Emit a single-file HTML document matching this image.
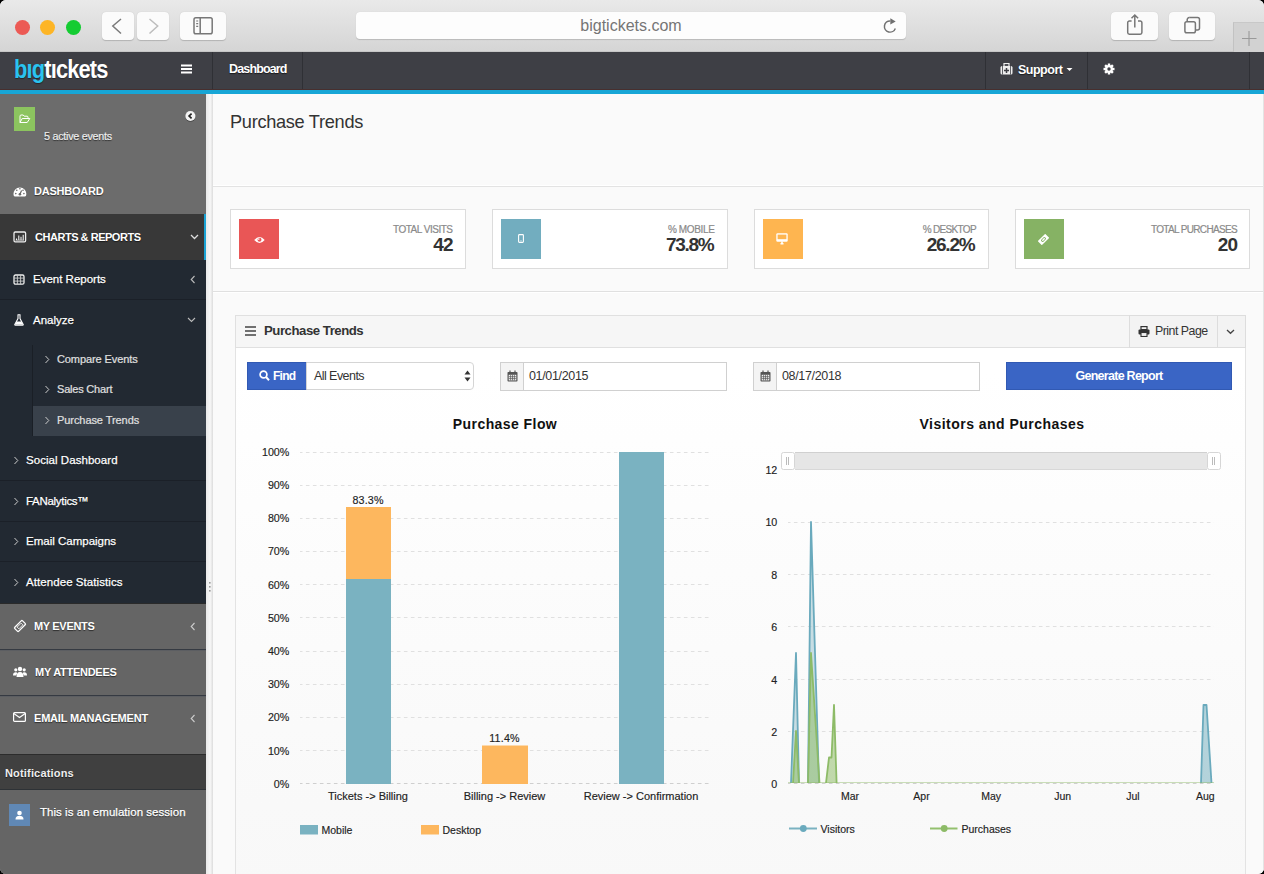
<!DOCTYPE html>
<html><head><meta charset="utf-8">
<style>
*{margin:0;padding:0;box-sizing:border-box}
html,body{width:1264px;height:874px;overflow:hidden;background:#000}
body{font-family:"Liberation Sans",sans-serif;position:relative}
.a{position:absolute;white-space:nowrap}
#win{position:absolute;left:0;top:0;width:1264px;height:874px;border-radius:6px;overflow:hidden;background:#fafafa}
/* safari toolbar */
#tb{left:0;top:0;width:1264px;height:52px;background:linear-gradient(#e9e9e9,#d5d5d5);border-bottom:1px solid #c6c6c6}
.tl{width:15px;height:15px;border-radius:50%;top:20.3px}
.sbtn{background:#fbfbfb;border-radius:4px;box-shadow:0 0.5px 1px rgba(0,0,0,.18)}
#url{left:356px;top:12px;width:550px;height:27px;background:#fdfdfd;border-radius:4px;box-shadow:0 0.5px 1px rgba(0,0,0,.15);font-size:16px;color:#757575;text-align:center;line-height:27px}
/* navbar */
#nav{left:0;top:52px;width:1264px;height:38px;background:#3e3f45}
#blue{left:0;top:90px;width:1264px;height:4px;background:#17a6d6;z-index:5}
.ts{text-shadow:0 1px 1px rgba(0,0,0,.6)}
/* sidebar */
#sb{left:0;top:93px;width:206px;height:781px;background:#6c6c6c}
.sbt{color:#fff;font-weight:bold;font-size:11px;letter-spacing:-.2px;text-shadow:0 1px 1px rgba(0,0,0,.55);line-height:14px}
.sub{color:#fff;font-size:12px;text-shadow:0 1px 1px rgba(0,0,0,.55);line-height:14px;-webkit-text-stroke:.25px #fff}
.ss{color:#e0e0e0;font-size:11px;line-height:14px;letter-spacing:-.2px;-webkit-text-stroke:.2px #e0e0e0}
.chev{color:#bbb}
/* content */
.stat{background:#fff;border:1px solid #dcdcdc;height:59.5px;width:235.5px;top:209px}
.ico{left:8.2px;top:8.5px;width:40px;height:40px}
.slab{right:12px;top:13.5px;font-size:10px;color:#8a8a8a;-webkit-text-stroke:.2px #8a8a8a;letter-spacing:-.45px;line-height:12px}
.sval{right:12px;top:25.3px;font-size:19px;color:#333;font-weight:bold;letter-spacing:-1px;line-height:20px}
.ax{font-size:10.7px;color:#222;line-height:12px;-webkit-text-stroke:.15px #222}
.grid line{stroke:#e0e0e0;stroke-width:1;stroke-dasharray:3.6 3.4;stroke-dashoffset:1.1}
</style></head><body>
<div id="win">
 <!-- SAFARI TOOLBAR -->
 <div id="tb" class="a">
  <div class="a tl" style="left:15px;background:#ec5a55"></div>
  <div class="a tl" style="left:40px;background:#fdb526"></div>
  <div class="a tl" style="left:66px;background:#14cc32"></div>
  <div class="a sbtn" style="left:102px;top:12px;width:32px;height:28px">
   <svg class="a" style="left:0;top:0" width="32" height="28"><path d="M19 7 L10.8 14 L19 21.5" fill="none" stroke="#7a7a7a" stroke-width="1.5"/></svg>
  </div>
  <div class="a sbtn" style="left:137px;top:12px;width:32px;height:28px">
   <svg class="a" style="left:0;top:0" width="32" height="28"><path d="M12.5 7 L20.7 14 L12.5 21.5" fill="none" stroke="#bdbdbd" stroke-width="1.5"/></svg>
  </div>
  <div class="a sbtn" style="left:180px;top:12px;width:46px;height:28px">
   <svg class="a" style="left:0;top:0" width="46" height="28"><rect x="14" y="5.7" width="18.2" height="16" rx="1.8" fill="none" stroke="#777" stroke-width="1.5"/><line x1="20.2" y1="5.7" x2="20.2" y2="21.7" stroke="#777" stroke-width="1.5"/><path d="M16.2 9h2M16.2 11.6h2M16.2 14.3h2" stroke="#777" stroke-width="1.2"/></svg>
  </div>
  <div id="url" class="a">bigtickets.com
   <svg class="a" style="left:526px;top:6px" width="16" height="16"><path d="M13.3 10.4 A5.6 5.6 0 1 1 8.3 2.9" fill="none" stroke="#707070" stroke-width="1.5"/><path d="M8.3 0.3 L13.7 3.4 L8.3 6.6 Z" fill="#707070"/></svg>
  </div>
  <div class="a sbtn" style="left:1111px;top:12px;width:47px;height:28px">
   <svg class="a" style="left:0;top:0" width="47" height="28"><path d="M20.6 9 h-2.2 a1.7 1.7 0 0 0 -1.7 1.7 v9.8 a1.7 1.7 0 0 0 1.7 1.7 h10.8 a1.7 1.7 0 0 0 1.7 -1.7 v-9.8 a1.7 1.7 0 0 0 -1.7 -1.7 h-2.2" fill="none" stroke="#777" stroke-width="1.5"/><path d="M23.8 15.5 V3.2 M20.5 6.3 L23.8 3 L27.1 6.3" fill="none" stroke="#777" stroke-width="1.5"/></svg>
  </div>
  <div class="a sbtn" style="left:1169px;top:12px;width:46px;height:28px">
   <svg class="a" style="left:0;top:0" width="46" height="28"><rect x="15.9" y="9.8" width="10.5" height="11" rx="1.8" fill="none" stroke="#777" stroke-width="1.5"/><path d="M20.2 5.6 h8.3 a2 2 0 0 1 2 2 v8.3 a2 2 0 0 1 -2 2 h-2" fill="none" stroke="#777" stroke-width="1.5"/><path d="M20.2 5.6 a2 2 0 0 0 -2 2 v2.2" fill="none" stroke="#777" stroke-width="1.5"/></svg>
  </div>
  <div class="a" style="left:1233px;top:22px;width:31px;height:30px;background:#d2d2d2;border-left:1px solid #c2c2c2;border-top:1px solid #c8c8c8">
   <svg class="a" style="left:0;top:0" width="31" height="30"><path d="M8 15.5h14.5M15 8v15" stroke="#999" stroke-width="1.1"/></svg>
  </div>
 </div>

 <!-- NAVBAR -->
 <div id="nav" class="a">
  <div class="a" style="left:14px;top:2px;font-size:26px;font-weight:bold;letter-spacing:-1px;line-height:30px;text-shadow:0 1px 1px rgba(0,0,0,.4);transform:scaleX(.84);transform-origin:0 0"><span style="color:#2ac3f0">bıg</span><span style="color:#fff">tıckets</span></div>
  <svg class="a" style="left:180px;top:11px" width="14" height="14"><path d="M1 2.5h11M1 6h11M1 9.5h11" stroke="#fff" stroke-width="2"/></svg>
  <div class="a" style="left:212px;top:0;width:1px;height:38px;background:#2f3035"></div>
  <div class="a ts" style="left:229px;top:9px;font-size:12.5px;font-weight:bold;color:#fff;letter-spacing:-.85px;line-height:16px">Dashboard</div>
  <div class="a" style="left:302px;top:0;width:1px;height:38px;background:#2f3035"></div>
  <div class="a" style="left:985px;top:0;width:1px;height:38px;background:#2f3035"></div>
  <svg class="a" style="left:1000px;top:11px" width="13" height="12"><rect x="0.5" y="3" width="12" height="8.5" rx="1.5" fill="#eee"/><rect x="4" y="0.5" width="5" height="3" fill="none" stroke="#eee" stroke-width="1.2"/><path d="M6.5 5v5M4 7.5h5" stroke="#3e3f45" stroke-width="1.5"/><path d="M2.5 3v8.5M10.5 3v8.5" stroke="#3e3f45" stroke-width=".8"/></svg>
  <div class="a ts" style="left:1018px;top:10px;font-size:12.5px;font-weight:bold;color:#fff;letter-spacing:-.5px;line-height:16px">Support</div>
  <svg class="a" style="left:1066px;top:15px" width="7" height="5"><path d="M0.5 1 L3.5 4 L6.5 1 Z" fill="#fff"/></svg>
  <div class="a" style="left:1087px;top:0;width:1px;height:38px;background:#2f3035"></div>
  <svg class="a" style="left:1103px;top:10.7px" width="12" height="12" viewBox="0 0 12 12"><g fill="#fff" transform="translate(6 6)"><circle r="3.9"/><rect x="-1.2" y="-5.5" width="2.4" height="11"/><rect x="-1.2" y="-5.5" width="2.4" height="11" transform="rotate(45)"/><rect x="-1.2" y="-5.5" width="2.4" height="11" transform="rotate(90)"/><rect x="-1.2" y="-5.5" width="2.4" height="11" transform="rotate(135)"/><circle r="1.7" fill="#3e3f45"/></g></svg>
  <div class="a" style="left:1249px;top:0;width:1px;height:38px;background:#2f3035"></div>
 </div>
 <div id="blue" class="a"></div>
 <div class="a" style="left:0;top:89px;width:1264px;height:1px;background:#472f2e"></div>

 <!-- SIDEBAR -->
 <div id="sb" class="a">
  <!-- top gray panel -->
  <div class="a" style="left:14px;top:14px;width:21px;height:24px;background:#8cc45f"></div>
  <svg class="a" style="left:19px;top:21px" width="12" height="10"><path d="M1 2.2 Q1 1 2 1 H4.2 L5.2 2.2 H8 Q9 2.2 9 3.2 V4 M1 2.2 V8.5 H8.2 L10.8 4.5 H3.2 L1 8.5" fill="none" stroke="#fff" stroke-width="1"/></svg>
  <div class="a ss" style="left:44px;top:36px;font-size:10.8px;letter-spacing:-.28px;color:#eee;-webkit-text-stroke:.2px #eee;text-shadow:0 1px 1px rgba(0,0,0,.6)">5 active events</div>
  <svg class="a" style="left:184px;top:16px" width="13" height="14"><circle cx="6.4" cy="7.6" r="5.2" fill="rgba(0,0,0,.35)"/><circle cx="6.4" cy="7" r="5.1" fill="#f4f4f4"/><path d="M7.6 4.6 L5.1 7 L7.6 9.4" fill="none" stroke="#222" stroke-width="1.7"/></svg>
  <svg class="a" style="left:13px;top:93px" width="14" height="11"><path d="M.6 9 A6.4 6.4 0 1 1 13.2 9 Q13.2 10.4 12 10.4 H1.8 Q.6 10.4 .6 9Z" fill="#fff"/><path d="M6.9 8.2 L8.6 4.6" stroke="#696969" stroke-width="1.2"/><circle cx="6.9" cy="8.3" r="1.3" fill="#696969"/><circle cx="2.8" cy="7.6" r=".8" fill="#696969"/><circle cx="3.8" cy="4.3" r=".8" fill="#696969"/><circle cx="6.9" cy="2.8" r=".8" fill="#696969"/><circle cx="10.9" cy="7.6" r=".8" fill="#696969"/><circle cx="10" cy="4.3" r=".8" fill="#696969"/></svg>
  <div class="a sbt" style="left:34px;top:91px;letter-spacing:-.23px">DASHBOARD</div>
  <!-- charts & reports -->
  <div class="a" style="left:0;top:121px;width:206px;height:46px;background:#383838"></div>
  <div class="a" style="left:204px;top:121px;width:2px;height:46px;background:#1ba3d4"></div>
  <svg class="a" style="left:13px;top:138px" width="14" height="12"><rect x="1" y="1" width="11.6" height="9.8" rx="1.2" fill="none" stroke="#eee" stroke-width="1.3"/><path d="M3.5 9V7.5M5.8 9V4.5M8 9V5.8M10.2 9V3.8" stroke="#fff" stroke-width="1"/><path d="M2.5 9.2H11" stroke="#ddd" stroke-width=".8"/></svg>
  <div class="a sbt" style="left:35px;top:137px;letter-spacing:-.47px">CHARTS &amp; REPORTS</div>
  <svg class="a" style="left:190px;top:141px" width="9" height="6"><path d="M1 1 L4.5 4.5 L8 1" fill="none" stroke="#ddd" stroke-width="1.3"/></svg>
  <!-- navy submenu -->
  <div class="a" style="left:0;top:167px;width:206px;height:343px;background:#222932"></div>
  <div class="a" style="left:0;top:206px;width:206px;height:1px;background:#1b2028"></div>
  <div class="a" style="left:0;top:387px;width:206px;height:1px;background:#1b2028"></div>
  <div class="a" style="left:0;top:428px;width:206px;height:1px;background:#1b2028"></div>
  <div class="a" style="left:0;top:468px;width:206px;height:1px;background:#1b2028"></div>
  <div class="a" style="left:32px;top:252px;width:1px;height:91px;background:#1a1f26"></div>
  <div class="a" style="left:33px;top:313px;width:173px;height:30px;background:#39414b"></div>
  <svg class="a" style="left:13px;top:180.5px" width="12" height="11"><rect x="1" y="1" width="10" height="9.2" rx="1.5" fill="none" stroke="#eee" stroke-width="1.3"/><path d="M1 4.1H11M1 7.1H11M4.4 1V10.2M7.6 1V10.2" stroke="#ccc" stroke-width=".9"/></svg>
  <div class="a sub" style="left:33px;top:179px;font-size:11.5px">Event Reports</div>
  <svg class="a" style="left:190px;top:182px" width="6" height="9"><path d="M4.5 1 L1.2 4.5 L4.5 8" fill="none" stroke="#bbb" stroke-width="1.1"/></svg>
  <svg class="a" style="left:14px;top:221px" width="10" height="12"><path d="M3.5 .8H6.5M4 1V4.5L.8 10.5Q.5 11.2 1.3 11.2H8.7Q9.5 11.2 9.2 10.5L6 4.5V1" fill="none" stroke="#fff" stroke-width="1.1"/><path d="M2.6 7.5H7.4L9 10.8H1Z" fill="#fff"/></svg>
  <div class="a sub" style="left:33px;top:220px;font-size:11.5px">Analyze</div>
  <svg class="a" style="left:187px;top:224px" width="9" height="6"><path d="M1 1 L4.5 4.5 L8 1" fill="none" stroke="#bbb" stroke-width="1.1"/></svg>
  <svg class="a" style="left:44px;top:262px" width="6" height="9"><path d="M1.5 1 L4.8 4.5 L1.5 8" fill="none" stroke="#ccc" stroke-width="1"/></svg>
  <div class="a ss" style="left:57px;top:259px;letter-spacing:-.1px">Compare Events</div>
  <svg class="a" style="left:44px;top:292px" width="6" height="9"><path d="M1.5 1 L4.8 4.5 L1.5 8" fill="none" stroke="#ccc" stroke-width="1"/></svg>
  <div class="a ss" style="left:57px;top:289px;letter-spacing:-.2px">Sales Chart</div>
  <svg class="a" style="left:44px;top:323px" width="6" height="9"><path d="M1.5 1 L4.8 4.5 L1.5 8" fill="none" stroke="#ccc" stroke-width="1"/></svg>
  <div class="a ss" style="left:57px;top:320px;letter-spacing:-.07px">Purchase Trends</div>
  <svg class="a" style="left:13px;top:363px" width="6" height="9"><path d="M1.5 1 L4.8 4.5 L1.5 8" fill="none" stroke="#ccc" stroke-width="1"/></svg>
  <div class="a sub" style="left:26px;top:360px;font-size:11.5px;letter-spacing:.05px">Social Dashboard</div>
  <svg class="a" style="left:13px;top:404px" width="6" height="9"><path d="M1.5 1 L4.8 4.5 L1.5 8" fill="none" stroke="#ccc" stroke-width="1"/></svg>
  <div class="a sub" style="left:26px;top:401px;font-size:11.5px;letter-spacing:-.3px">FANalytics™</div>
  <svg class="a" style="left:13px;top:444px" width="6" height="9"><path d="M1.5 1 L4.8 4.5 L1.5 8" fill="none" stroke="#ccc" stroke-width="1"/></svg>
  <div class="a sub" style="left:26px;top:441px;font-size:11.5px">Email Campaigns</div>
  <svg class="a" style="left:13px;top:485px" width="6" height="9"><path d="M1.5 1 L4.8 4.5 L1.5 8" fill="none" stroke="#ccc" stroke-width="1"/></svg>
  <div class="a sub" style="left:26px;top:482px;font-size:11.5px;letter-spacing:.07px">Attendee Statistics</div>
  <!-- lower gray -->
  <div class="a" style="left:0;top:510px;width:206px;height:271px;background:#656565"></div>
  <div class="a" style="left:0;top:510px;width:206px;height:1px;background:#2a2a2a"></div>
  <svg class="a" style="left:13px;top:526px" width="14" height="14"><g transform="rotate(-45 7 7)"><rect x="1.5" y="4.2" width="11" height="5.6" rx="1" fill="none" stroke="#fff" stroke-width="1.3"/><rect x="4.2" y="5.8" width="5.6" height="2.4" fill="none" stroke="#eee" stroke-width=".9"/></g></svg>
  <div class="a sbt" style="left:34px;top:526px;letter-spacing:-.33px">MY EVENTS</div>
  <svg class="a" style="left:190px;top:529px" width="6" height="9"><path d="M4.5 1 L1.2 4.5 L4.5 8" fill="none" stroke="#ccc" stroke-width="1.1"/></svg>
  <div class="a" style="left:0;top:556px;width:206px;height:1px;background:#353a42"></div>
  <div class="a" style="left:0;top:557px;width:206px;height:1px;background:#5c5e62"></div>
  <svg class="a" style="left:13px;top:573px" width="14" height="12"><circle cx="7" cy="3" r="2.2" fill="#fff"/><circle cx="2.8" cy="3.8" r="1.6" fill="#fff"/><circle cx="11.2" cy="3.8" r="1.6" fill="#fff"/><path d="M3.5 11 Q3.5 6 7 6 Q10.5 6 10.5 11Z" fill="#fff"/><path d="M0 9.5 Q0 6.2 2.8 6.2 Q4 6.2 4.3 7 L3.2 9.5Z M14 9.5 Q14 6.2 11.2 6.2 Q10 6.2 9.7 7 L10.8 9.5Z" fill="#fff"/></svg>
  <div class="a sbt" style="left:35px;top:572px;letter-spacing:-.27px">MY ATTENDEES</div>
  <div class="a" style="left:0;top:602px;width:206px;height:1px;background:#353a42"></div>
  <div class="a" style="left:0;top:603px;width:206px;height:1px;background:#5c5e62"></div>
  <svg class="a" style="left:13px;top:619px" width="13" height="10"><rect x=".6" y=".6" width="11.8" height="8.8" rx="1" fill="none" stroke="#fff" stroke-width="1.2"/><path d="M.8 1.5 L6.5 5.5 L12.2 1.5" fill="none" stroke="#fff" stroke-width="1.1"/></svg>
  <div class="a sbt" style="left:34px;top:618px">EMAIL MANAGEMENT</div>
  <svg class="a" style="left:190px;top:621px" width="6" height="9"><path d="M4.5 1 L1.2 4.5 L4.5 8" fill="none" stroke="#ccc" stroke-width="1.1"/></svg>
  <!-- notifications -->
  <div class="a" style="left:0;top:661px;width:206px;height:36px;background:#404040;border-top:1px solid #2c2c2c;border-bottom:1px solid #2e3236"></div>
  <div class="a sbt" style="left:5px;top:673px;letter-spacing:.17px;color:#eee">Notifications</div>
  <div class="a" style="left:9px;top:711px;width:21px;height:22px;background:#6088b5"></div>
  <svg class="a" style="left:14px;top:716px" width="11" height="12"><circle cx="5.5" cy="4" r="2.3" fill="#fff"/><path d="M1.5 10.5 Q1.5 6.8 5.5 6.8 Q9.5 6.8 9.5 10.5Z" fill="#fff"/></svg>
  <div class="a sub" style="left:40px;top:712px;font-size:11.5px;letter-spacing:.04px">This is an emulation session</div>
 </div>
 <!-- sidebar/content gap -->
 <div class="a" style="left:206px;top:93px;width:7px;height:781px;background:linear-gradient(90deg,#e9e9e9,#f7f7f7 60%,#dcdcdc)"></div>
 <svg class="a" style="left:208px;top:580px" width="4" height="13"><rect x="1" y="2" width="1.6" height="1.6" fill="#999"/><rect x="1" y="6" width="1.6" height="1.6" fill="#999"/><rect x="1" y="10" width="1.6" height="1.6" fill="#999"/></svg>

 <!-- CONTENT -->
 <div class="a" style="left:213px;top:93px;width:1051px;height:781px;background:#fafafa"></div>
 <div class="a" style="left:230px;top:111px;font-size:18.2px;color:#333;letter-spacing:-.3px;line-height:22px">Purchase Trends</div>
 <div class="a" style="left:213px;top:186px;width:1051px;height:1px;background:#e3e3e3"></div>
 <div class="a" style="left:213px;top:291px;width:1051px;height:1px;background:#e0e0e0"></div>
 <div class="a" style="left:213px;top:292px;width:1051px;height:1px;background:#fff"></div>
 <div class="a" style="left:213px;top:185px;width:1051px;height:1px;background:#fff"></div>
 <div class="a" style="left:1263px;top:93px;width:1px;height:781px;background:#e4e4e4"></div>
 <!-- stats -->
 <div class="a stat" style="left:230px"><div class="a ico" style="background:#e95656"></div>
  <svg class="a" style="left:22.5px;top:25.5px" width="11" height="8"><path d="M.3 4 Q5.5 -2.2 10.7 4 Q5.5 10.2 .3 4Z" fill="#fff"/><circle cx="5.5" cy="3.8" r="2" fill="#e95656"/><circle cx="4.8" cy="3.1" r=".8" fill="#fff"/></svg>
  <div class="a slab" style="letter-spacing:-.49px">TOTAL VISITS</div><div class="a sval" style="letter-spacing:-1px">42</div></div>
 <div class="a stat" style="left:492px"><div class="a ico" style="background:#72adbf"></div>
  <svg class="a" style="left:25px;top:24.3px" width="6" height="9"><rect x=".6" y=".6" width="4.8" height="7.8" rx=".8" fill="none" stroke="#fff" stroke-width="1.1"/><circle cx="3" cy="6.8" r=".6" fill="#fff"/></svg>
  <div class="a slab" style="letter-spacing:-.36px">% MOBILE</div><div class="a sval" style="letter-spacing:-1.3px;right:13.2px">73.8%</div></div>
 <div class="a stat" style="left:753.5px"><div class="a ico" style="background:#feb550"></div>
  <svg class="a" style="left:21.4px;top:23px" width="12" height="12"><rect x=".3" y=".3" width="11.4" height="8.4" rx="1.2" fill="#fff"/><rect x="1.6" y="1.6" width="8.8" height="4.6" fill="#feb550"/><path d="M4.5 10.8h3M6 8.5v2.3" stroke="#fff" stroke-width="1.6"/></svg>
  <div class="a slab" style="letter-spacing:-.66px">% DESKTOP</div><div class="a sval" style="letter-spacing:-1.2px;right:13.5px">26.2%</div></div>
 <div class="a stat" style="left:1014.5px"><div class="a ico" style="background:#86b264"></div>
  <svg class="a" style="left:22.8px;top:23.5px" width="11" height="11"><g transform="rotate(-45 5.5 5.5)"><rect x=".2" y="2.6" width="10.6" height="5.8" rx=".6" fill="#fff"/><rect x="2.8" y="4" width="5.4" height="3" rx="1" fill="#86b264"/><rect x="3.8" y="4.8" width="3.4" height="1.4" fill="#fff"/></g></svg>
  <div class="a slab" style="letter-spacing:-.66px">TOTAL PURCHASES</div><div class="a sval" style="letter-spacing:-.97px">20</div></div>

 <!-- panel -->
 <div class="a" style="left:235px;top:315px;width:1011px;height:570px;background:linear-gradient(#fff 10%,#fcfcfc 45%,#f8f8f8);border:1px solid #e3e3e3"></div>
 <div class="a" style="left:235px;top:315px;width:1011px;height:33px;background:#f6f6f6;border:1px solid #e0e0e0"></div>
 <svg class="a" style="left:245px;top:326px" width="11" height="10"><path d="M0 1h11M0 5h11M0 9h11" stroke="#444" stroke-width="1.4"/></svg>
 <div class="a" style="left:264px;top:323px;font-size:13.2px;font-weight:bold;color:#333;letter-spacing:-.47px;line-height:16px">Purchase Trends</div>
 <div class="a" style="left:1129px;top:315px;width:89px;height:33px;background:#f3f3f3;border:1px solid #ddd"></div>
 <div class="a" style="left:1217px;top:315px;width:29px;height:33px;background:#f3f3f3;border:1px solid #ddd"></div>
 <svg class="a" style="left:1138px;top:326px" width="12" height="11"><rect x="3" y=".6" width="6" height="3" fill="none" stroke="#333" stroke-width="1.2"/><rect x=".5" y="3.5" width="11" height="5" rx="1" fill="#333"/><rect x="3" y="6.5" width="6" height="4" fill="#f0f0f0" stroke="#333" stroke-width="1.1"/></svg>
 <div class="a" style="left:1155px;top:323px;font-size:12.4px;color:#333;letter-spacing:-.52px;line-height:16px">Print Page</div>
 <svg class="a" style="left:1226px;top:329px" width="9" height="6"><path d="M1 1 L4.5 4.3 L8 1" fill="none" stroke="#444" stroke-width="1.3"/></svg>

 <!-- form -->
 <div class="a" style="left:247px;top:362px;width:60px;height:28px;background:#3a65c5;border:1px solid #3159b3"></div>
 <svg class="a" style="left:259px;top:370px" width="11" height="12"><circle cx="4.5" cy="4.5" r="3.4" fill="none" stroke="#fff" stroke-width="1.7"/><path d="M7 7 L10 10.2" stroke="#fff" stroke-width="2"/></svg>
 <div class="a" style="left:273px;top:368px;font-size:12px;font-weight:bold;color:#fff;letter-spacing:-.75px;line-height:16px">Find</div>
 <div class="a" style="left:306px;top:362px;width:168px;height:28px;background:#fff;border:1px solid #d5d5d5;border-radius:0 4px 4px 0"></div>
 <div class="a" style="left:314px;top:368px;font-size:12.5px;color:#333;letter-spacing:-.56px;line-height:16px">All Events</div>
 <svg class="a" style="left:464px;top:370px" width="7" height="12"><path d="M.5 4.5 L3.5 .5 L6.5 4.5Z M.5 7.5 L3.5 11.5 L6.5 7.5Z" fill="#333"/></svg>
 <div class="a" style="left:500px;top:362px;width:227px;height:28.5px;background:#fff;border:1px solid #d0d0d0"></div>
 <div class="a" style="left:500px;top:362px;width:24px;height:28.5px;background:#f4f4f4;border:1px solid #d0d0d0"></div>
 <svg class="a" style="left:507px;top:370px" width="11" height="12"><rect x=".5" y="2" width="10" height="9.5" rx=".8" fill="#555"/><rect x="1.7" y="4.8" width="7.6" height="5.6" fill="#f4f4f4"/><path d="M1.7 6.7h7.6M1.7 8.6h7.6M3.6 4.8v5.6M5.5 4.8v5.6M7.4 4.8v5.6" stroke="#555" stroke-width=".7"/><path d="M3 .5v2.5M8 .5v2.5" stroke="#555" stroke-width="1.2"/></svg>
 <div class="a" style="left:529px;top:368px;font-size:12.5px;color:#333;letter-spacing:-.34px;line-height:16px">01/01/2015</div>
 <div class="a" style="left:753px;top:362px;width:227px;height:28.5px;background:#fff;border:1px solid #d0d0d0"></div>
 <div class="a" style="left:753px;top:362px;width:24px;height:28.5px;background:#f4f4f4;border:1px solid #d0d0d0"></div>
 <svg class="a" style="left:760px;top:370px" width="11" height="12"><rect x=".5" y="2" width="10" height="9.5" rx=".8" fill="#555"/><rect x="1.7" y="4.8" width="7.6" height="5.6" fill="#f4f4f4"/><path d="M1.7 6.7h7.6M1.7 8.6h7.6M3.6 4.8v5.6M5.5 4.8v5.6M7.4 4.8v5.6" stroke="#555" stroke-width=".7"/><path d="M3 .5v2.5M8 .5v2.5" stroke="#555" stroke-width="1.2"/></svg>
 <div class="a" style="left:782px;top:368px;font-size:12.5px;color:#333;letter-spacing:-.34px;line-height:16px">08/17/2018</div>
 <div class="a" style="left:1006px;top:362px;width:226px;height:28px;background:#3a65c5;border:1px solid #3159b3"></div>
 <div class="a" style="left:1006px;top:368px;width:226px;text-align:center;font-size:12.5px;font-weight:bold;color:#fff;letter-spacing:-.73px;line-height:16px">Generate Report</div>

 <!-- CHART 1 -->
 <svg class="a" style="left:0;top:0" width="1264" height="874">
  <g class="grid">
   <line x1="300" y1="452.5" x2="711" y2="452.5"/><line x1="300" y1="485.5" x2="711" y2="485.5"/><line x1="300" y1="518.5" x2="711" y2="518.5"/><line x1="300" y1="551.5" x2="711" y2="551.5"/><line x1="300" y1="584.5" x2="711" y2="584.5"/><line x1="300" y1="617.5" x2="711" y2="617.5"/><line x1="300" y1="651.5" x2="711" y2="651.5"/><line x1="300" y1="684.5" x2="711" y2="684.5"/><line x1="300" y1="717.5" x2="711" y2="717.5"/><line x1="300" y1="750.5" x2="711" y2="750.5"/><line x1="300" y1="783.5" x2="711" y2="783.5" style="stroke:#cfcfcf"/>
  </g>
  <rect x="346" y="579" width="45" height="205" fill="#7ab2c1"/>
  <rect x="346" y="507" width="45" height="72" fill="#fdb75e"/>
  <rect x="482" y="745.5" width="46" height="38.5" fill="#fdb75e"/>
  <rect x="619" y="452" width="45" height="332" fill="#7ab2c1"/>
  <g class="grid">
   <line x1="788" y1="522.5" x2="1214" y2="522.5"/><line x1="788" y1="574.5" x2="1214" y2="574.5"/><line x1="788" y1="626.5" x2="1214" y2="626.5"/><line x1="788" y1="679.5" x2="1214" y2="679.5"/><line x1="788" y1="731.5" x2="1214" y2="731.5"/><line x1="788" y1="783.5" x2="1214" y2="783.5" style="stroke:#cfcfcf"/>
  </g>
  <!-- scrollbar -->
  <rect x="795" y="452" width="412" height="18" fill="#e6e6e6"/>
  <line x1="795" y1="452.5" x2="1207" y2="452.5" stroke="#d0d0d0"/>
  <line x1="795" y1="469.5" x2="1207" y2="469.5" stroke="#d8d8d8"/>
  <rect x="781.5" y="452.5" width="13" height="17" rx="2" fill="#fff" stroke="#d6d6d6"/>
  <rect x="1207.5" y="452.5" width="13" height="17" rx="2" fill="#fff" stroke="#d6d6d6"/>
  <path d="M786.5 457v8M788.5 457v8M1212.5 457v8M1214.5 457v8" stroke="#aaa" stroke-width=".8"/>
  <!-- areas -->
  <path d="M791 783 L796 653 L799 783 Z" fill="rgba(122,178,193,.4)"/>
  <path d="M808 783 L811 522 L819 783 Z" fill="rgba(122,178,193,.4)"/>
  <path d="M1201 783 L1203.5 705 L1206.5 705 L1211.5 783 Z" fill="rgba(122,178,193,.55)"/>
  <path d="M791 783 L796 653 L799 783 M808 783 L811 522 L819 783 M1201 783 L1203.5 705 L1206.5 705 L1211.5 783" fill="none" stroke="#6aaabd" stroke-width="1.8" stroke-linejoin="round"/>
  <path d="M793 783 L796 731 L799 783 Z M808 783 L811 653 L819.5 783 Z M826 783 L829 757.5 L831.5 757.5 L834 705 L836.6 783Z" fill="rgba(145,190,105,.55)"/>
  <line x1="788" y1="782.5" x2="1214" y2="782.5" stroke="rgba(141,187,103,.45)" stroke-width="1"/>
  <path d="M793 783 L796 731 L799 783 M808 783 L811 653 L819.5 783 M826 783 L829 757.5 L831.5 757.5 L834 705 L836.6 783" fill="none" stroke="#8dbb67" stroke-width="1.8" stroke-linejoin="round"/>
  <!-- legend -->
  <rect x="300" y="825" width="18" height="9.5" fill="#7ab2c1"/>
  <rect x="421" y="825" width="18" height="9.5" fill="#fdb75e"/>
  <line x1="789" y1="828.5" x2="817" y2="828.5" stroke="#7ab2c1" stroke-width="2"/><circle cx="803.3" cy="828.5" r="3.4" fill="#6aaabd"/>
  <line x1="930" y1="828.5" x2="957.5" y2="828.5" stroke="#93c06e" stroke-width="2"/><circle cx="944.2" cy="828.5" r="3.4" fill="#8dbb67"/>
 </svg>
 <div class="a" style="left:405px;top:416px;width:200px;text-align:center;font-size:14px;font-weight:bold;color:#111;letter-spacing:.43px;line-height:16px">Purchase Flow</div>
 <div class="a" style="left:902px;top:416px;width:200px;text-align:center;font-size:14px;font-weight:bold;color:#111;letter-spacing:.47px;line-height:16px">Visitors and Purchases</div>
 <div class="a ax" style="left:239px;width:50.3px;text-align:right;top:445.7px">100%</div>
 <div class="a ax" style="left:239px;width:50.3px;text-align:right;top:478.9px">90%</div>
 <div class="a ax" style="left:239px;width:50.3px;text-align:right;top:512.1px">80%</div>
 <div class="a ax" style="left:239px;width:50.3px;text-align:right;top:545.3px">70%</div>
 <div class="a ax" style="left:239px;width:50.3px;text-align:right;top:578.5px">60%</div>
 <div class="a ax" style="left:239px;width:50.3px;text-align:right;top:611.7px">50%</div>
 <div class="a ax" style="left:239px;width:50.3px;text-align:right;top:644.9px">40%</div>
 <div class="a ax" style="left:239px;width:50.3px;text-align:right;top:678.1px">30%</div>
 <div class="a ax" style="left:239px;width:50.3px;text-align:right;top:711.3px">20%</div>
 <div class="a ax" style="left:239px;width:50.3px;text-align:right;top:744.5px">10%</div>
 <div class="a ax" style="left:239px;width:50.3px;text-align:right;top:777.7px">0%</div>
 <div class="a ax" style="left:727px;width:50.3px;text-align:right;top:463.8px">12</div>
 <div class="a ax" style="left:727px;width:50.3px;text-align:right;top:516.2px">10</div>
 <div class="a ax" style="left:727px;width:50.3px;text-align:right;top:568.7px">8</div>
 <div class="a ax" style="left:727px;width:50.3px;text-align:right;top:621.1px">6</div>
 <div class="a ax" style="left:727px;width:50.3px;text-align:right;top:673.5px">4</div>
 <div class="a ax" style="left:727px;width:50.3px;text-align:right;top:726.0px">2</div>
 <div class="a ax" style="left:727px;width:50.3px;text-align:right;top:778.4px">0</div>
 <div class="a ax" style="left:318px;width:100px;text-align:center;top:494px;letter-spacing:.16px">83.3%</div>
 <div class="a ax" style="left:454.5px;width:100px;text-align:center;top:732px;letter-spacing:.2px">11.4%</div>
 <div class="a ax" style="left:318px;width:100px;text-align:center;top:790px;font-size:11px">Tickets -&gt; Billing</div>
 <div class="a ax" style="left:454.5px;width:100px;text-align:center;top:790px;font-size:11px">Billing -&gt; Review</div>
 <div class="a ax" style="left:541px;width:200px;text-align:center;top:790px;font-size:11px">Review -&gt; Confirmation</div>
 <div class="a ax" style="left:321.5px;top:824px;font-size:10.5px">Mobile</div>
 <div class="a ax" style="left:442.5px;top:824px;font-size:10.5px">Desktop</div>
 <div class="a ax" style="left:820.5px;top:823px;font-size:10.5px">Visitors</div>
 <div class="a ax" style="left:961.5px;top:823px;font-size:10.5px">Purchases</div>
 <div class="a ax" style="left:820px;width:60px;text-align:center;top:790px;font-size:10.5px">Mar</div>
 <div class="a ax" style="left:891.5px;width:60px;text-align:center;top:790px;font-size:10.5px">Apr</div>
 <div class="a ax" style="left:961.2px;width:60px;text-align:center;top:790px;font-size:10.5px">May</div>
 <div class="a ax" style="left:1032.6px;width:60px;text-align:center;top:790px;font-size:10.5px">Jun</div>
 <div class="a ax" style="left:1103px;width:60px;text-align:center;top:790px;font-size:10.5px">Jul</div>
 <div class="a ax" style="left:1175.3px;width:60px;text-align:center;top:790px;font-size:10.5px">Aug</div>
</div>
</body></html>
